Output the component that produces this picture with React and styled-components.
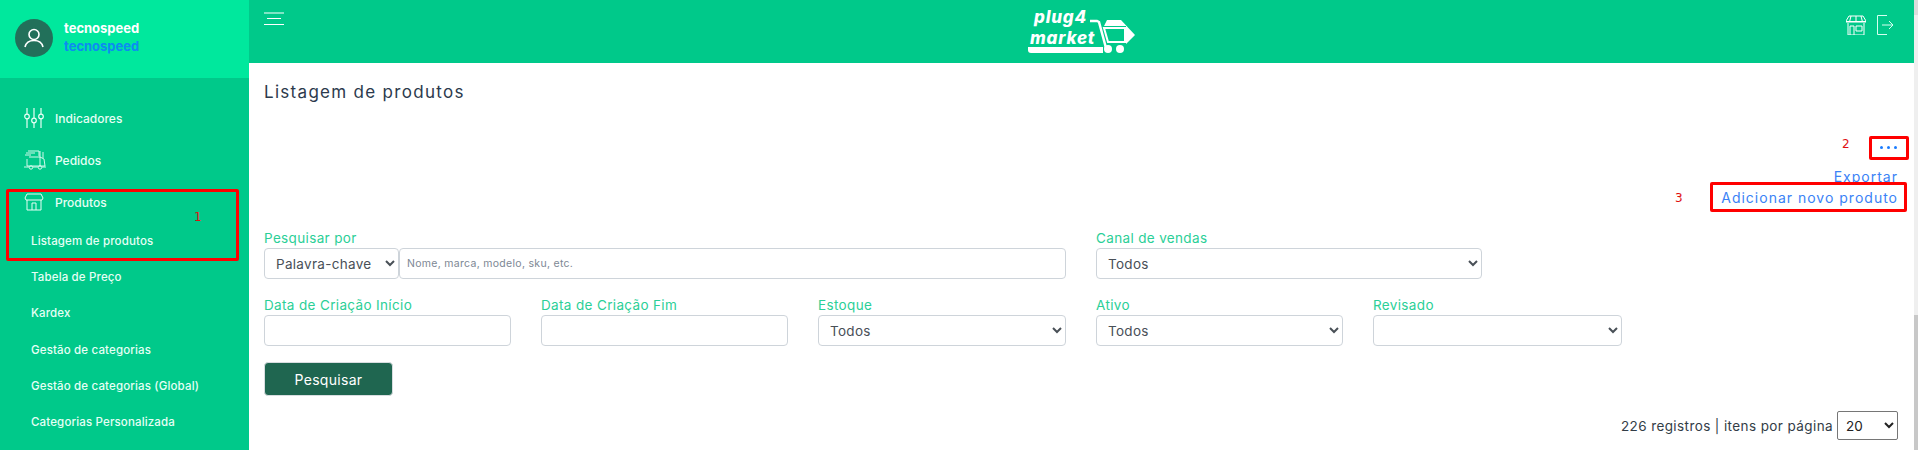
import React from 'react'
import styled, { createGlobalStyle } from 'styled-components'

const GlobalStyle = createGlobalStyle`
  * { box-sizing: border-box; }
  html, body { margin: 0; height: 450px; overflow: hidden; background: #fff; }
  body { font-family: "Inter", "Noto Sans", sans-serif; }
`

const Page = styled.div`
  position: relative;
  display: grid;
  grid-template-columns: 249px 1fr 4px;
  height: 450px;
  overflow: hidden;
`

const Sidebar = styled.aside`
  background: #00c98a;
  color: #e6fff5;
`

const Profile = styled.div`
  height: 78px;
  background: #00e89d;
  padding: 19px 15px;
  display: flex;
  gap: 11px;
`

const Avatar = styled.div`
  width: 38px;
  height: 38px;
  border-radius: 50%;
  background: #22705a;
  display: flex;
  align-items: center;
  justify-content: center;
`

const ProfileNames = styled.div`
  padding-top: 0;
  font-size: 13px;
  font-weight: 700;
  line-height: 18px;
`

const ProfileName = styled.div`
  color: ${(props) => props.$color};
`

const Nav = styled.nav`
  padding-top: 19px;
`

const NavItem = styled.div`
  height: 42px;
  padding-left: 24px;
  display: grid;
  grid-template-columns: 20px 1fr;
  align-items: center;
  column-gap: 11px;
  font-size: 12px;
  font-weight: 500;
`

const SubItem = styled.div`
  height: 36.2px;
  padding-left: 31px;
  display: flex;
  align-items: center;
  font-size: 11.5px;
  font-weight: 500;
  letter-spacing: 0.15px;
  &:first-of-type { margin-top: 3px; }
`

const Main = styled.main`
  min-width: 0;
`

const Header = styled.header`
  height: 63px;
  background: #00c98a;
  padding: 12px 20px 0 15px;
  display: flex;
  justify-content: space-between;
  align-items: flex-start;
`

const HeaderIcons = styled.div`
  display: flex;
  gap: 11px;
  padding-top: 3px;
`

const Logo = styled.div`
  position: absolute;
  left: 1028px;
  top: 8px;
  width: 108px;
  height: 46px;
`

const LogoWord = styled.div`
  position: absolute;
  left: ${(props) => props.$left}px;
  top: ${(props) => props.$top}px;
  color: #fff;
  font-size: 17px;
  line-height: 17px;
  font-weight: 800;
  font-style: italic;
  letter-spacing: 0.8px;
`

const Content = styled.div`
  padding: 20px 16px 0 15px;
`

const Title = styled.h1`
  margin: 0;
  font-size: 17px;
  line-height: 18px;
  font-weight: 400;
  letter-spacing: 1.3px;
  color: #2c3a4d;
`

const Actions = styled.div`
  height: 129px;
  padding-top: 34px;
  display: flex;
  flex-direction: column;
  align-items: flex-end;
  color: #3a82f6;
  font-size: 14px;
  line-height: 21px;
  letter-spacing: 1px;
`

const Dots = styled.div`
  height: 24px;
  margin-bottom: 7px;
  padding-right: 1px;
  display: flex;
  align-items: center;
  gap: 4px;
`

const Dot = styled.span`
  width: 3px;
  height: 3px;
  border-radius: 50%;
  background: #1a7cff;
`

const FormRow = styled.div`
  display: grid;
  grid-template-columns: ${(props) => props.$columns};
  column-gap: 30px;
  margin-bottom: ${(props) => props.$gap}px;
`

const Field = styled.label`
  display: block;
  min-width: 0;
`

const Label = styled.div`
  color: #2bcf97;
  font-size: 13.5px;
  line-height: 17px;
  margin-bottom: 1px;
  letter-spacing: 0.35px;
`

const Group = styled.div`
  display: grid;
  grid-template-columns: 135px 1fr;
`

const Select = styled.select`
  width: 100%;
  height: 31px;
  border: 1px solid #ced4da;
  border-radius: 4px;
  background: #fff;
  color: #495057;
  font: inherit;
  font-size: 13.5px;
  letter-spacing: 0.3px;
  padding: 0 4px 0 7px;
`

const TextInput = styled.input`
  width: 100%;
  height: 31px;
  border: 1px solid #ced4da;
  border-radius: 4px;
  background: #fff;
  font: inherit;
  font-size: 10.5px;
  letter-spacing: 0.3px;
  padding: 0 7px;
  &::placeholder { color: #7d8794; opacity: 1; }
`

const SearchButton = styled.button`
  width: 129px;
  height: 34px;
  border: 1px solid #d8dde0;
  border-radius: 4px;
  background: #1f6650;
  color: #fff;
  font: inherit;
  font-size: 14px;
  letter-spacing: 0.3px;
`

const Pagination = styled.div`
  margin-top: 15px;
  display: flex;
  justify-content: flex-end;
  align-items: center;
  gap: 4px;
  color: #333d47;
  font-size: 13.5px;
  letter-spacing: 0.4px;
`

const PageSelect = styled.select`
  width: 61px;
  height: 29px;
  border: 1px solid #767676;
  border-radius: 2px;
  background: #fff;
  color: #222;
  font: inherit;
  font-size: 13.5px;
  padding: 0 4px;
`

const Scrollbar = styled.div`
  background: linear-gradient(#dcdcdc 15px, #efefef 15px, #efefef 315px, #c8c8c8 315px);
`

const Note = styled.div`
  position: absolute;
  left: ${(props) => props.$left}px;
  top: ${(props) => props.$top}px;
  width: ${(props) => props.$width}px;
  height: ${(props) => props.$height}px;
  border: 3px solid #ff0000;
  border-radius: 2px;
`

const NoteNumber = styled.span`
  position: absolute;
  left: ${(props) => props.$left}px;
  top: ${(props) => props.$top}px;
  color: #e01010;
  font-family: "DejaVu Sans", sans-serif;
  font-size: 12px;
  line-height: 14px;
`

const line = { stroke: '#fff', strokeWidth: 1.2, fill: 'none' }

function Hamburger() {
  return (
    <svg width="20" height="14" viewBox="0 0 20 14" {...line}>
      <path d="M0 1h20M3 6.5h14M0 12.5h20" />
    </svg>
  )
}

function UserIcon() {
  return (
    <svg width="22" height="22" viewBox="0 0 22 22" fill="none" stroke="#fff" strokeWidth="1.6">
      <circle cx="11" cy="7.5" r="5" />
      <path d="M2 20c1-4.500 4.500-6.500 9-6.500s8 2 9 6.500" />
    </svg>
  )
}

function SlidersIcon() {
  return (
    <svg width="20" height="20" viewBox="0 0 20 20" fill="none" stroke="#e6fff5" strokeWidth="1.2">
      <path d="M3 0v6M3 11v9M10 0v10M10 15v5M17 0v6M17 11v9" />
      <circle cx="3" cy="8.500" r="2.300" />
      <circle cx="10" cy="12.500" r="2.300" />
      <circle cx="17" cy="8.500" r="2.300" />
    </svg>
  )
}

function TruckIcon() {
  return (
    <svg width="22" height="20" viewBox="0 0 22 20" fill="none" stroke="#e6fff5" strokeWidth="0.9">
      <path d="M4 1h11v5M2 3h9M1 5h6M5 7h11l4 2 1 7H3V9M0 17h5M9 17h5M18 17h4M16 1v6M19 2v6M16 7v9" />
      <circle cx="7" cy="17.500" r="1.700" />
      <circle cx="16" cy="17.500" r="1.700" />
    </svg>
  )
}

function ShopIcon() {
  return (
    <svg width="20" height="18" viewBox="0 0 20 18" fill="none" stroke="#e6fff5" strokeWidth="1">
      <path d="M3 1h14l2 4-1 2H2L1 5zM3 7v10h14V7M8 17v-7h4v7" />
    </svg>
  )
}

function MarketIcon() {
  return (
    <svg width="20" height="20" viewBox="0 0 20 20" fill="none" stroke="#fff" strokeWidth="1">
      <path d="M3 1h14l3 5v1H0V6zM0 6.500h20M5 1 3.500 7M10 1v6M15 1l1.500 6M2 8v12h16V8M4 20v-9h4v9M10 11h6v5h-6z" />
    </svg>
  )
}

function ExitIcon() {
  return (
    <svg width="17" height="20" viewBox="0 0 17 20" fill="none" stroke="#d5fff0" strokeWidth="1">
      <path d="M10 .5H.5v19H10M5 10h11M12 6l4 4-4 4" />
    </svg>
  )
}

function Cart() {
  return (
    <svg width="108" height="46" viewBox="0 0 108 46">
      <path d="M0 39h75v6H3a3 3 0 0 1-3-3z" fill="#fff" />
      <path d="M62 13h7l2 1 7 26" fill="none" stroke="#fff" strokeWidth="2.500" />
      <path d="M79 12h14l14 15-9 9v-18H76z" fill="#fff" />
      <path d="M76 20h21v14H80z" fill="#00c98a" stroke="#fff" strokeWidth="2" />
      <circle cx="80" cy="41" r="4" fill="#fff" />
      <circle cx="92" cy="41" r="4" fill="#fff" />
    </svg>
  )
}

const subItems = [
  'Listagem de produtos',
  'Tabela de Preço',
  'Kardex',
  'Gestão de categorias',
  'Gestão de categorias (Global)',
  'Categorias Personalizada',
]

function App() {
  return (
    <Page>
      <GlobalStyle />
      <Sidebar>
        <Profile>
          <Avatar><UserIcon /></Avatar>
          <ProfileNames>
            <ProfileName $color="#fff">tecnospeed</ProfileName>
            <ProfileName $color="#0d8bf2">tecnospeed</ProfileName>
          </ProfileNames>
        </Profile>
        <Nav>
          <NavItem><SlidersIcon />Indicadores</NavItem>
          <NavItem><TruckIcon />Pedidos</NavItem>
          <NavItem><ShopIcon />Produtos</NavItem>
          {subItems.map((item) => <SubItem key={item}>{item}</SubItem>)}
        </Nav>
      </Sidebar>

      <Main>
        <Header>
          <Hamburger />
          <HeaderIcons>
            <MarketIcon />
            <ExitIcon />
          </HeaderIcons>
        </Header>
        <Content>
          <Title>Listagem de produtos</Title>
          <Actions>
            <Dots><Dot /><Dot /><Dot /></Dots>
            <div>Exportar</div>
            <div>Adicionar novo produto</div>
          </Actions>
          <FormRow $columns="802px 386px" $gap={18}>
            <Field>
              <Label>Pesquisar por</Label>
              <Group>
                <Select><option>Palavra-chave</option></Select>
                <TextInput placeholder="Nome, marca, modelo, sku, etc." />
              </Group>
            </Field>
            <Field>
              <Label>Canal de vendas</Label>
              <Select><option>Todos</option></Select>
            </Field>
          </FormRow>
          <FormRow $columns="247px 247px 248px 247px 249px" $gap={16}>
            <Field>
              <Label>Data de Criação Início</Label>
              <TextInput />
            </Field>
            <Field>
              <Label>Data de Criação Fim</Label>
              <TextInput />
            </Field>
            <Field>
              <Label>Estoque</Label>
              <Select><option>Todos</option></Select>
            </Field>
            <Field>
              <Label>Ativo</Label>
              <Select><option>Todos</option></Select>
            </Field>
            <Field>
              <Label>Revisado</Label>
              <Select><option></option></Select>
            </Field>
          </FormRow>
          <SearchButton>Pesquisar</SearchButton>
          <Pagination>
            226 registros | itens por página
            <PageSelect><option>20</option></PageSelect>
          </Pagination>
        </Content>
      </Main>
      <Scrollbar />

      <Logo>
        <LogoWord $left={6} $top={1}>plug4</LogoWord>
        <LogoWord $left={2} $top={22}>market</LogoWord>
        <Cart />
      </Logo>

      <Note $left={6} $top={189} $width={233} $height={72} />
      <NoteNumber $left={194} $top={210}>1</NoteNumber>
      <Note $left={1869} $top={136} $width={40} $height={24} />
      <NoteNumber $left={1842} $top={137}>2</NoteNumber>
      <Note $left={1710} $top={182} $width={197} $height={30} />
      <NoteNumber $left={1675} $top={191}>3</NoteNumber>
    </Page>
  )
}

export default App
